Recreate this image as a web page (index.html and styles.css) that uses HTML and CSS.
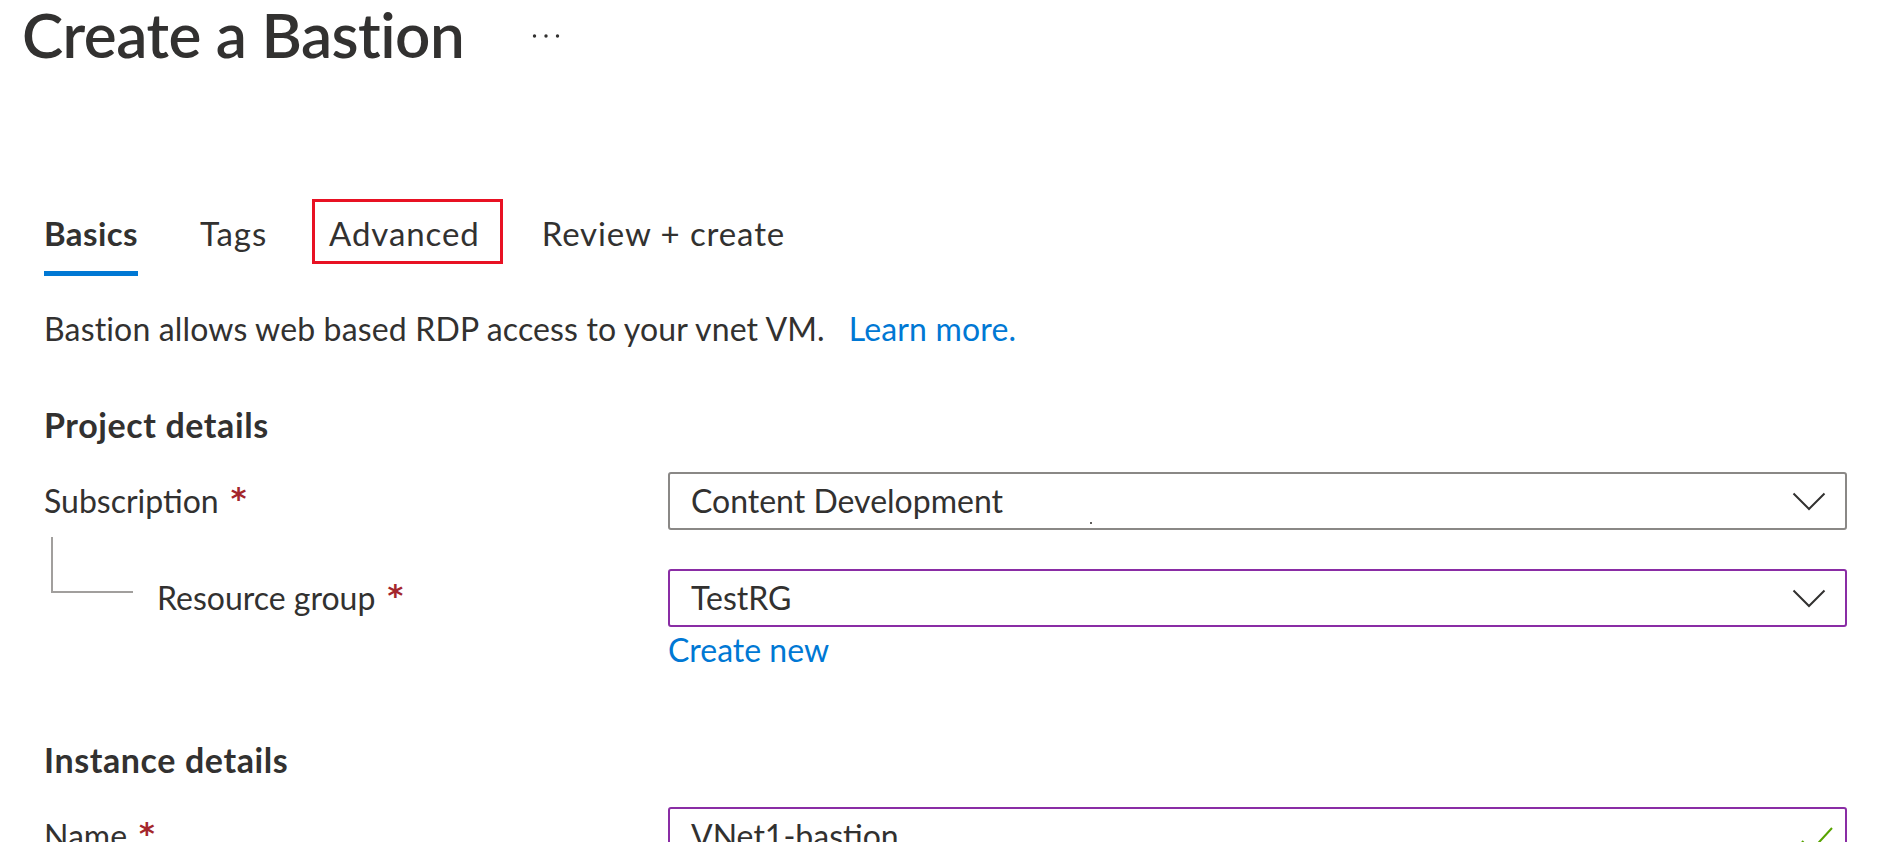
FILE: index.html
```html
<!DOCTYPE html>
<html lang="en">
<head>
<meta charset="utf-8">
<title>Create a Bastion</title>
<link rel="stylesheet" href="styles.css">
</head>
<body>
<div class="page">
  <header class="blade-header">
    <h1 class="title">Create a Bastion</h1>
    <span class="more" aria-label="More">
      <svg width="28" height="6" viewBox="0 0 28 6"><circle cx="2.5" cy="3" r="1.7" fill="#323130"/><circle cx="14" cy="3" r="1.7" fill="#323130"/><circle cx="25.5" cy="3" r="1.7" fill="#323130"/></svg>
    </span>
  </header>

  <nav class="tabs">
    <a class="tab active">Basics</a>
    <a class="tab">Tags</a>
    <a class="tab highlighted">Advanced</a>
    <a class="tab">Review + create</a>
  </nav>

  <p class="intro">Bastion allows web based RDP access to your vnet VM.<a class="link learn">Learn more.</a></p>

  <h2 class="section">Project details</h2>
  <div class="form">
    <div class="label">Subscription<span class="req">*</span></div>
    <div class="dropdown">
      <span class="value">Content Development</span>
      <span class="speck"></span>
      <svg class="chevron" width="34" height="19" viewBox="0 0 34 19"><path d="M1.5 1.5 L17 17 L32.5 1.5" fill="none" stroke="#323130" stroke-width="2"/></svg>
    </div>

    <div class="label nested"><span class="tree"></span>Resource group<span class="req">*</span></div>
    <div class="field-group">
      <div class="dropdown active-field">
        <span class="value">TestRG</span>
        <svg class="chevron" width="34" height="19" viewBox="0 0 34 19"><path d="M1.5 1.5 L17 17 L32.5 1.5" fill="none" stroke="#323130" stroke-width="2"/></svg>
      </div>
      <a class="link create">Create new</a>
    </div>
  </div>

  <h2 class="section instance">Instance details</h2>
  <div class="form">
    <div class="label">Name<span class="req">*</span></div>
    <div class="textbox">
      <span class="value">VNet1-bastion</span>
      <svg class="check" width="32" height="26" viewBox="0 0 32 26"><path d="M1 14 L10 24 L31 1" fill="none" stroke="#57a300" stroke-width="2"/></svg>
    </div>
  </div>
</div>
</body>
</html>
```

FILE: styles.css
```css
html, body {
  margin: 0;
  padding: 0;
  overflow: hidden;
  background: #ffffff;
}

body {
  font-family: Lato, "Open Sans", "Liberation Sans", sans-serif;
  color: #323130;
  font-size: 32px;
  line-height: 40px;
}

.page {
  padding-left: 44px;
}

.blade-header {
  display: flex;
  align-items: flex-start;
  margin-left: -22px;
  height: 76px;
}

.title {
  margin: 0;
  font-size: 62px;
  line-height: 68px;
  font-weight: 600;
  letter-spacing: -0.5px;
  color: #323130;
}

.more {
  display: flex;
  margin-left: 68px;
  margin-top: 33px;
}

.tabs {
  display: flex;
  gap: 62px;
  margin-top: 137px;
}

.tab {
  position: relative;
  font-size: 33px;
  line-height: 40px;
  letter-spacing: 0.9px;
  padding-bottom: 18px;
  border-bottom: 5px solid transparent;
  color: #323130;
  cursor: pointer;
}

.tab.active {
  font-weight: 700;
  letter-spacing: 0.4px;
  border-bottom-color: #0078d4;
}

.tab.highlighted::after {
  content: "";
  position: absolute;
  left: -17px;
  right: -23px;
  top: -14px;
  height: 59px;
  border: 3px solid #e81123;
}

.intro {
  margin: 33px 0 0 0;
  letter-spacing: 0.15px;
}

.link {
  color: #0078d4;
  cursor: pointer;
}

.learn {
  margin-left: 24px;
}

.section {
  margin: 56px 0 0 0;
  font-size: 34px;
  line-height: 40px;
  font-weight: 700;
  letter-spacing: 0.6px;
}

.section.instance {
  margin-top: 70px;
}

.form {
  display: grid;
  grid-template-columns: 624px 1179px;
  row-gap: 39px;
  margin-top: 27px;
  align-items: start;
}

.label {
  display: flex;
  align-items: center;
  height: 58px;
}

.req {
  color: #a4262c;
  margin-left: 12px;
  font-family: "DejaVu Sans", sans-serif;
  font-size: 30px;
  font-weight: 700;
  position: relative;
  top: -2px;
}

.tree {
  flex: none;
  align-self: flex-start;
  box-sizing: border-box;
  width: 82px;
  height: 56px;
  margin-top: -32px;
  margin-left: 7px;
  margin-right: 24px;
  border-left: 2px solid #a19f9d;
  border-bottom: 2px solid #a19f9d;
}

.dropdown,
.textbox {
  position: relative;
  box-sizing: border-box;
  height: 58px;
  display: flex;
  align-items: center;
  justify-content: space-between;
  padding: 0 19px 0 21px;
  border: 2px solid #8a8886;
  border-radius: 3px;
}

.dropdown.active-field,
.textbox {
  border-color: #8a2da5;
}

.textbox {
  padding-right: 12px;
}

.speck {
  position: absolute;
  left: 420px;
  top: 48px;
  width: 2px;
  height: 2px;
  background: #605e5c;
}

.chevron {
  display: block;
}

.check {
  display: block;
  margin-top: 8px;
}

.field-group {
  display: flex;
  flex-direction: column;
}

.create {
  margin-top: 3px;
  align-self: flex-start;
}
```
